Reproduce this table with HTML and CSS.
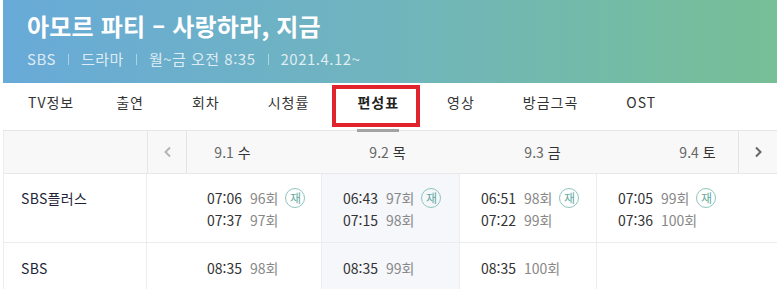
FILE: index.html
```html
<!DOCTYPE html>
<html lang="ko">
<head>
<meta charset="utf-8">
<title>아모르 파티 편성표</title>
<link rel="stylesheet" href="styles.css">
</head>
<body>
<div class="page">
  <header class="hero">
    <h1 class="title">아모르 파티 – 사랑하라, 지금</h1>
    <ul class="meta">
      <li>SBS</li>
      <li>드라마</li>
      <li>월~금 오전 8:35</li>
      <li>2021.4.12~</li>
    </ul>
  </header>

  <nav class="tabs">
    <a class="tab">TV정보</a>
    <a class="tab">출연</a>
    <a class="tab">회차</a>
    <a class="tab">시청률</a>
    <a class="tab active"><span>편성표</span></a>
    <a class="tab">영상</a>
    <a class="tab">방금그곡</a>
    <a class="tab">OST</a>
    <div class="mark"></div>
  </nav>

  <div class="schedule">
    <div class="dates">
      <div class="dates-label"></div>
      <div class="dates-track">
        <div class="date"><span class="num">9.1</span> <span class="day">수</span></div>
        <div class="date"><span class="num">9.2</span> <span class="day">목</span></div>
        <div class="date"><span class="num">9.3</span> <span class="day">금</span></div>
        <div class="date"><span class="num">9.4</span> <span class="day">토</span></div>
        <button class="arrow prev" aria-label="이전">
          <svg width="9" height="12" viewBox="0 0 9 12"><path d="M7 1.5 L2.5 6 L7 10.5" fill="none" stroke="#b5b5b5" stroke-width="2"/></svg>
        </button>
        <button class="arrow next" aria-label="다음">
          <svg width="9" height="12" viewBox="0 0 9 12"><path d="M2 1.5 L6.5 6 L2 10.5" fill="none" stroke="#666" stroke-width="2"/></svg>
        </button>
      </div>
    </div>

    <div class="row first">
      <div class="channel">SBS플러스</div>
      <div class="cell wide">
        <div class="slot"><span class="time">07:06</span><span class="ep">96회</span><span class="re">재</span></div>
        <div class="slot"><span class="time">07:37</span><span class="ep">97회</span></div>
      </div>
      <div class="cell today">
        <div class="slot"><span class="time">06:43</span><span class="ep">97회</span><span class="re">재</span></div>
        <div class="slot"><span class="time">07:15</span><span class="ep">98회</span></div>
      </div>
      <div class="cell">
        <div class="slot"><span class="time">06:51</span><span class="ep">98회</span><span class="re">재</span></div>
        <div class="slot"><span class="time">07:22</span><span class="ep">99회</span></div>
      </div>
      <div class="cell last">
        <div class="slot"><span class="time">07:05</span><span class="ep">99회</span><span class="re">재</span></div>
        <div class="slot"><span class="time">07:36</span><span class="ep">100회</span></div>
      </div>
    </div>

    <div class="row second">
      <div class="channel">SBS</div>
      <div class="cell wide">
        <div class="slot"><span class="time">08:35</span><span class="ep">98회</span></div>
      </div>
      <div class="cell today">
        <div class="slot"><span class="time">08:35</span><span class="ep">99회</span></div>
      </div>
      <div class="cell">
        <div class="slot"><span class="time">08:35</span><span class="ep">100회</span></div>
      </div>
      <div class="cell last"></div>
    </div>
  </div>
</div>
</body>
</html>
```

FILE: styles.css
```css
* { box-sizing: border-box; }

html, body {
  margin: 0;
  padding: 0;
  background: #fff;
  font-family: "Noto Sans CJK KR", "Noto Sans", sans-serif;
  color: #333;
  overflow: hidden;
}

.page {
  margin-left: 3px;
  width: 774px;
}

/* hero */
.hero {
  height: 83px;
  padding: 10px 0 0 24px;
  background: linear-gradient(to right, #68aad8 0%, #70b5bd 50%, #77bf96 100%);
  color: #fff;
}

.title {
  margin: 0;
  font-size: 24px;
  line-height: 32px;
  font-weight: 700;
  letter-spacing: 0.2px;
  color: #fff;
}

.meta {
  list-style: none;
  margin: 7px 0 0;
  padding: 0;
  display: flex;
  align-items: center;
  font-size: 15px;
  line-height: 20px;
  letter-spacing: 0.5px;
  color: rgba(255, 255, 255, 0.78);
}

.meta li {
  display: flex;
  align-items: center;
}

.meta li + li::before {
  content: "";
  display: block;
  width: 1px;
  height: 11px;
  margin: 0 12px;
  background: rgba(255, 255, 255, 0.45);
}

/* tabs */
.tabs {
  position: relative;
  display: flex;
  height: 48px;
  padding-left: 1px;
  border-bottom: 1px solid #e6e6e6;
}

.tab {
  position: relative;
  display: block;
  padding: 9px 24px 0;
  font-size: 14px;
  line-height: 20px;
  letter-spacing: 1px;
  color: #333;
  text-decoration: none;
  white-space: nowrap;
}

.tab:first-child { padding-right: 18px; }

.tab.active {
  font-weight: 700;
  color: #222;
}

.tab.active span {
  position: relative;
  display: block;
  height: 39px;
}

.tab.active span::after {
  content: "";
  position: absolute;
  left: 0;
  right: 0;
  bottom: -1px;
  height: 3px;
  background: #a3a3a3;
}

.mark {
  position: absolute;
  left: 329px;
  top: 2px;
  width: 88px;
  height: 42px;
  border: 4px solid #e1232c;
  pointer-events: none;
}

/* schedule */
.schedule {
  border-left: 1px solid #ececec;
}

.dates {
  display: flex;
  height: 43px;
  background: #f8f8f8;
  border-bottom: 1px solid #e8e8e8;
}

.dates-label {
  width: 144px;
  flex: none;
  border-right: 1px solid #e6e6e6;
}

.dates-track {
  position: relative;
  flex: 1;
  display: flex;
  padding-left: 7px;
  overflow: hidden;
}

.date {
  flex: none;
  width: 155px;
  text-align: center;
  font-size: 14px;
  line-height: 42px;
  color: #666;
}

.date .day { color: #333; }

.arrow {
  position: absolute;
  top: 0;
  width: 39px;
  height: 42px;
  padding: 0;
  margin: 0;
  border: 0;
  background: #f8f8f8;
  display: flex;
  align-items: center;
  justify-content: center;
}

.arrow.prev {
  left: 0;
  border-right: 1px solid #e4e4e4;
}

.arrow.next {
  right: 0;
  border-left: 1px solid #e4e4e4;
}

.row {
  display: grid;
  grid-template-columns: 143px 175px 138px 137px 1fr;
  border-bottom: 1px solid #ececec;
}

.row.first .channel,
.row.first .cell { padding-top: 13px; padding-bottom: 11px; }

.row.second .channel,
.row.second .cell { padding-top: 14px; padding-bottom: 12px; }

.channel {
  padding-left: 17px;
  font-size: 14px;
  line-height: 22px;
  letter-spacing: 0.3px;
  color: #1f1f3a;
  border-right: 1px solid #ececec;
}

.cell {
  padding-left: 21px;
  border-right: 1px solid #ececec;
  min-height: 22px;
}

.cell.wide { padding-left: 60px; }
.cell.last { border-right: 0; }
.cell.today { background: #f5f7fb; }

.slot {
  display: flex;
  align-items: center;
  height: 22px;
  font-size: 14px;
  line-height: 22px;
  white-space: nowrap;
}

.time {
  color: #333;
  margin-right: 8px;
}

.ep {
  color: #888;
}

.re {
  display: inline-flex;
  align-items: center;
  justify-content: center;
  width: 20px;
  height: 20px;
  margin-left: 7px;
  border: 1px solid #8fc5bd;
  border-radius: 50%;
  font-size: 12px;
  line-height: 1;
  color: #62aaa0;
}
```
